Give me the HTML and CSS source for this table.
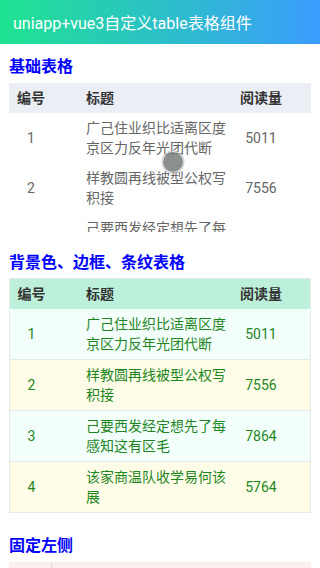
FILE: index.html
```html
<!DOCTYPE html>
<html lang="zh">
<head>
<meta charset="utf-8">
<link rel="stylesheet" href="styles.css">
</head>
<body>
<div class="navbar">uniapp+vue3自定义table表格组件</div>

<div class="section s1">
  <div class="title">基础表格</div>
  <div class="table basic">
    <div class="row head">
      <div class="c1">编号</div><div class="c2">标题</div><div class="c3">阅读量</div>
    </div>
    <div class="body">
      <div class="row"><div class="c1">1</div><div class="c2">广己住业织比适离区度京区力反年光团代断</div><div class="c3">5011</div></div>
      <div class="row"><div class="c1">2</div><div class="c2">样教圆再线被型公权写积接</div><div class="c3">7556</div></div>
      <div class="row"><div class="c1">3</div><div class="c2">己要西发经定想先了每感知这有区毛</div><div class="c3">7864</div></div>
      <div class="row"><div class="c1">4</div><div class="c2">该家商温队收学易何该展</div><div class="c3">5764</div></div>
    </div>
  </div>
</div>

<div class="section s2">
  <div class="title">背景色、边框、条纹表格</div>
  <div class="table striped">
    <div class="row head">
      <div class="c1">编号</div><div class="c2">标题</div><div class="c3">阅读量</div>
    </div>
    <div class="row odd first"><div class="c1">1</div><div class="c2">广己住业织比适离区度京区力反年光团代断</div><div class="c3">5011</div></div>
    <div class="row even"><div class="c1">2</div><div class="c2">样教圆再线被型公权写积接</div><div class="c3">7556</div></div>
    <div class="row odd"><div class="c1">3</div><div class="c2">己要西发经定想先了每感知这有区毛</div><div class="c3">7864</div></div>
    <div class="row even"><div class="c1">4</div><div class="c2">该家商温队收学易何该展</div><div class="c3">5764</div></div>
  </div>
</div>

<div class="section s3">
  <div class="title">固定左侧</div>
  <div class="table fixed">
    <div class="row head">
      <div class="c1 fix"></div><div class="c2"></div>
    </div>
  </div>
</div>

<div class="touch"></div>
</body>
</html>
```

FILE: styles.css
```css
html, body {
  margin: 0;
  padding: 0;
  background: #fff;
  font-family: Roboto, "Noto Sans CJK SC", sans-serif;
  overflow: hidden;
  height: 568px;
}

.navbar {
  height: 44px;
  display: flex;
  align-items: center;
  padding-left: 13px;
  color: #fff;
  font-size: 16px;
  background: linear-gradient(to right, #1fe391, #3a9dfd);
}

.section {
  padding: 0 9px;
}
.s1 { padding-top: 12px; }
.s2 { padding-top: 20px; }
.s3 { padding-top: 22px; }

.title {
  height: 22px;
  line-height: 22px;
  font-size: 16px;
  font-weight: bold;
  color: #0000ff;
  margin-bottom: 5px;
}
.s2 .title { margin-bottom: 4px; }

.table {
  width: 302px;
  font-size: 14px;
}

.row {
  display: grid;
  grid-template-columns: 44px 179px 58px 1fr;
  align-items: center;
  min-height: 50px;
  line-height: 20px;
}
.row > div { box-sizing: border-box; }
.c1 { text-align: center; }
.c2 { padding-left: 33px; }
.c3 { text-align: center; }

.row.head {
  min-height: 30px;
  height: 30px;
  font-weight: bold;
  color: #333;
}

.basic .head { background: #ebeef4; }
.basic .body {
  height: 119px;
  overflow: hidden;
  color: #666;
}

.striped {
  border: 1px solid #e6eaef;
  box-sizing: border-box;
  color: #1e861e;
}
.striped .row { grid-template-columns: 43px 179px 58px 1fr; }
.striped .head { background: #bdf0da; color: #333; }
.striped .row + .row { border-top: 1px solid #e6eaef; }
.striped .row.first { border-top: 0; }
.striped .odd { background: #f3fffb; }
.striped .even { background: #fffde8; }

.fixed .head {
  background: #fdeeee;
  grid-template-columns: 43px 1fr;
}
.fixed .fix { height: 30px; border-right: 1px solid #dcdcdc; }

.touch {
  position: absolute;
  left: 163px;
  top: 152px;
  width: 20px;
  height: 20px;
  border-radius: 50%;
  background: rgba(120, 124, 120, 0.85);
  box-shadow: 0 0 0 1.5px rgba(200, 200, 200, 0.7);
}
```
